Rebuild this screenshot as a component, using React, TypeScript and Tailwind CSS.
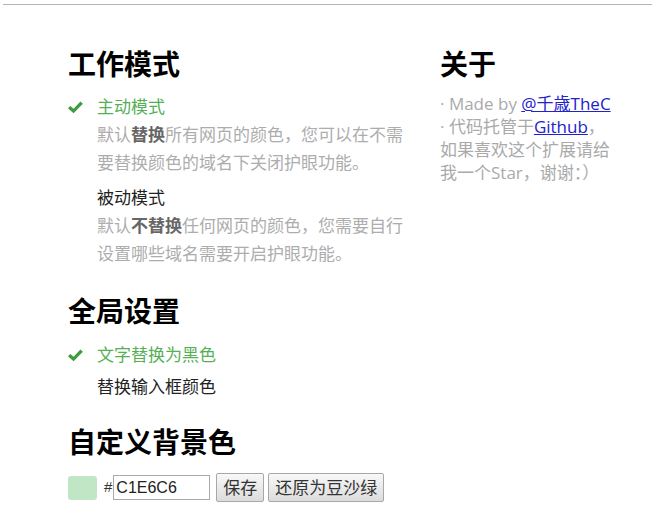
import React from 'react';

const cjk = "font-['Open_Sans','Noto_Sans_CJK_SC',sans-serif]";

function Check() {
  return (
    <svg viewBox="0 0 14 12" className="w-[15px] h-[13px] shrink-0" aria-hidden>
      <path d="M0 6.8 L2.2 4.5 L5.2 7.2 L11.6 0.4 L13.9 2.6 L5.2 11.4 Z" fill="#3d9c3d" />
    </svg>
  );
}

function Option({ active, label, children }: { active?: boolean; label: string; children?: React.ReactNode }) {
  return (
    <div>
      <div className="flex items-center h-[28px]">
        <div className="w-[29px] flex items-center">{active && <Check />}</div>
        <span className={active ? 'text-[#55b055]' : 'text-[#222]'}>{label}</span>
      </div>
      {children && <p className="pl-[29px] w-[340px] text-[#adadad] leading-[28px]">{children}</p>}
    </div>
  );
}

export default function App() {
  return (
    <div className={`min-h-[531px] bg-white text-[17px] ${cjk}`}>
      <div className="pt-[4px] px-[3px]">
        <div className="h-px bg-[#b4b4b4]" />
      </div>

      <div className="flex pl-[68px] pt-[42px]">
        {/* left column */}
        <div className="w-[372px]">
          <h2 className="text-[28px] leading-[34px] font-bold text-black">工作模式</h2>
          <div className="mt-[12px]">
            <Option active label="主动模式">
              默认<b className="text-[#666]">替换</b>所有网页的颜色，您可以在不需要替换颜色的域名下关闭护眼功能。
            </Option>
          </div>
          <div className="mt-[7px]">
            <Option label="被动模式">
              默认<b className="text-[#666]">不替换</b>任何网页的颜色，您需要自行设置哪些域名需要开启护眼功能。
            </Option>
          </div>

          <h2 className="mt-[26px] text-[28px] leading-[34px] font-bold text-black">全局设置</h2>
          <div className="mt-[13px] flex flex-col gap-[4px]">
            <Option active label="文字替换为黑色" />
            <Option label="替换输入框颜色" />
          </div>

          <h2 className="mt-[24px] text-[28px] leading-[34px] font-bold text-black">自定义背景色</h2>
          <div className="mt-[14px] flex items-center h-[29px]">
            <div className="w-[29px] h-[24px] rounded-[3px] bg-[#C1E6C6]" />
            <span className="ml-[7px] text-[15px] text-[#333] font-['Liberation_Sans',sans-serif]">#</span>
            <input
              defaultValue="C1E6C6"
              className="ml-[1px] w-[97px] h-[25px] border border-[#aaa] px-[2px] text-[16px] text-[#222] font-['Liberation_Sans',sans-serif] outline-none"
            />
            <button className="ml-[6px] h-[29px] px-[6px] border border-[#a8a8a8] rounded-[2px] bg-gradient-to-b from-[#f8f8f8] to-[#dcdcdc] text-[#333] leading-none">
              保存
            </button>
            <button className="ml-[4px] h-[29px] px-[6px] border border-[#a8a8a8] rounded-[2px] bg-gradient-to-b from-[#f8f8f8] to-[#dcdcdc] text-[#333] leading-none">
              还原为豆沙绿
            </button>
          </div>
        </div>

        {/* right column */}
        <div className="w-[180px]">
          <h2 className="text-[28px] leading-[34px] font-bold text-black">关于</h2>
          <div className="mt-[11px] text-[#aaa] leading-[23px]">
            <div>
              · Made by <a href="#" className="text-[#2222cc] underline">@千歳TheC</a>
            </div>
            <div>
              · 代码托管于<a href="#" className="text-[#2222cc] underline">Github</a>，
            </div>
            <div>如果喜欢这个扩展请给</div>
            <div>我一个Star，谢谢：）</div>
          </div>
        </div>
      </div>
    </div>
  );
}
